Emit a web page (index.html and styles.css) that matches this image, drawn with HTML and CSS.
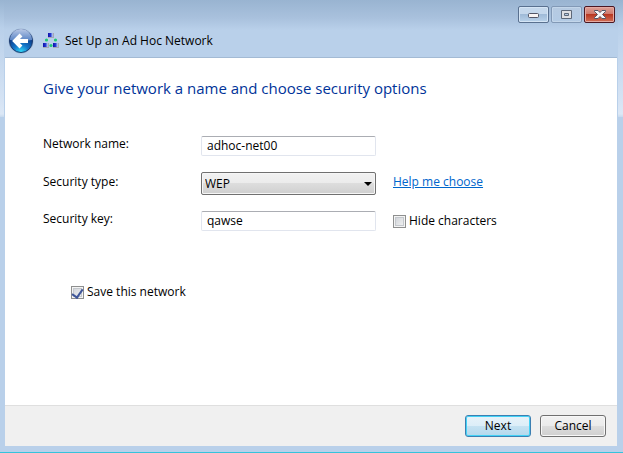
FILE: index.html
```html
<!DOCTYPE html>
<html lang="en">
<head>
<meta charset="utf-8">
<title>Set Up an Ad Hoc Network</title>
<link rel="stylesheet" href="styles.css">
</head>
<body>
<div class="window">
  <header class="titlebar">
    <div class="controls">
      <button class="control" type="button" aria-label="Minimize">
        <svg width="12" height="6" viewBox="0 0 12 6"><rect x=".5" y="1.5" width="10" height="4" rx="1" fill="#f8f4f4" stroke="#535666"/></svg>
      </button>
      <button class="control control-disabled" type="button" aria-label="Maximize" disabled>
        <svg width="12" height="10" viewBox="0 0 12 10"><path d="M.5.5h10v8H.5zM3.500 3.500v2h4v-2z" fill="#e0e0e3" fill-rule="evenodd" stroke="#5d6878"/></svg>
      </button>
      <button class="control control-close" type="button" aria-label="Close">
        <svg width="12" height="10" viewBox="0 0 12 10"><path d="M.5.5h3.500l2 2 2-2h3.500v1L8.500 4.500l3 3v1H8l-2-2-2 2H.5v-1l3-3-3-3z" fill="#f5f5f7" stroke="#535666"/></svg>
      </button>
    </div>
    <div class="nav">
      <button class="back" type="button" aria-label="Back">
        <svg width="26" height="26" viewBox="0 0 26 26">
          <defs>
            <linearGradient id="top" x2="0" y2="1"><stop offset="0" stop-color="#b9c8e6"/><stop offset="1" stop-color="#5480c3"/></linearGradient>
            <radialGradient id="base" cx=".5" cy="1" r=".75"><stop offset="0" stop-color="#35e6ff"/><stop offset=".45" stop-color="#1477c9"/><stop offset="1" stop-color="#0b3583"/></radialGradient>
          </defs>
          <circle cx="13" cy="13" r="12.500" fill="#9eb5d2"/>
          <circle cx="13" cy="13" r="11.500" fill="url(#base)" stroke="#1c3c70"/>
          <path d="M2 12a11 11 0 0 1 22 0Q13 14 2 12z" fill="url(#top)"/>
          <path d="M13 7 7 13l6 6M7.500 13H20" fill="none" stroke="#fff" stroke-width="4"/>
        </svg>
      </button>
      <svg class="network-icon" width="16" height="16" viewBox="0 0 16 16">
        <defs><linearGradient id="node"><stop offset="0" stop-color="#1010a8"/><stop offset=".5" stop-color="#2438d0"/><stop offset="1" stop-color="#c4d8f4"/></linearGradient></defs>
        <g fill="#a5a9b4"><path d="M5 0h6v5H5zM0 10h6v5H0zM10 10h6v5h-6z"/></g>
        <g fill="url(#node)"><path d="M5 0h5v4H5z"/><path d="M0 10h5v4H0z"/><path d="M10 10h5v4h-5z"/></g>
        <g fill="#20c878"><circle cx="3.500" cy="7" r="1.600"/><circle cx="12.500" cy="7" r="1.600"/><circle cx="8" cy="12.500" r="1.600"/></g>
      </svg>
      <span class="title">Set Up an Ad Hoc Network</span>
    </div>
  </header>
  <form class="page">
    <main class="content">
      <h1>Give your network a name and choose security options</h1>
      <div class="fields">
        <label class="caption" for="name">Network name:</label>
        <input class="text" id="name" type="text" value="adhoc-net00">
        <span></span>
        <label class="caption" for="type">Security type:</label>
        <div class="picker">
          <select id="type"><option>WEP</option></select>
          <svg class="arrow" width="8" height="4" viewBox="0 0 8 4"><path d="M0 0h8L4 4z"/></svg>
        </div>
        <a class="caption" href="#help">Help me choose</a>
        <label class="caption" for="key">Security key:</label>
        <input class="text" id="key" type="text" value="qawse">
        <label class="check"><input type="checkbox">Hide characters</label>
      </div>
      <label class="check save"><input type="checkbox" checked>Save this network</label>
    </main>
    <footer class="actions">
      <button class="button button-default" type="submit">Next</button>
      <button class="button" type="button">Cancel</button>
    </footer>
  </form>
</div>
</body>
</html>
```
FILE: styles.css
```css
* {
  box-sizing: border-box;
}

body {
  margin: 0;
  font: 12px/16px "Open Sans", "Noto Sans", sans-serif;
  color: #000;
}

button,
input,
select {
  margin: 0;
  font: inherit;
  color: inherit;
}

svg {
  display: block;
}

.window {
  display: flex;
  flex-direction: column;
  min-height: 100vh;
  padding: 0 6px 6px 5px;
  border-bottom: 1px solid #35c3dc;
  background:
    linear-gradient(#99b4d1 0, #b9d0ea 28px, #d5e3f4 100px, #dce8f6 114px, #c8daee 117px, transparent 117px) left / 4px 100% no-repeat,
    linear-gradient(#99b4d1 0, #b9d0ea 28px, #d5e3f4 100px, #dce8f6 114px, #c8daee 117px, transparent 117px) right / 5px 100% no-repeat,
    linear-gradient(#99b4d1 0, #a9c1dd 18px, #b9d0ea 30px) #b9d0ea;
}

.titlebar {
  padding-top: 6px;
  border-bottom: 1px solid #a3bad4;
}

.controls {
  display: flex;
  justify-content: flex-end;
  gap: 2px;
  padding-right: 2px;
}

.control {
  display: flex;
  align-items: center;
  justify-content: center;
  width: 31px;
  height: 17px;
  padding: 0;
  border: 1px solid #59708f;
  border-radius: 2px;
  background: linear-gradient(#c5d8ec 0 45%, #a0bbd8 50%, #b9d2ea);
  box-shadow: inset 0 0 0 1px #d5e5f5;
}

.control-disabled {
  border-color: #8299b6;
  background: linear-gradient(#b6cae1, #b3cbe5);
  box-shadow: inset 0 0 0 1px #c3d6ea;
}

.control-close {
  border-color: #4b1722;
  background: linear-gradient(#dda198 0, #d07a6d 45%, #b93822 50%, #d17058);
  box-shadow: inset 0 0 0 1px #e5aaa2;
}

.nav {
  display: flex;
  align-items: center;
  height: 34px;
  padding: 2px 0 0 3px;
}

.back {
  padding: 0;
  border: 0;
  background: none;
}

.network-icon {
  margin: 0 6px 0 9px;
}

.page {
  display: flex;
  flex: 1;
  flex-direction: column;
  background: #fff;
}

.content {
  flex: 1;
  padding: 19px 38px;
}

h1 {
  margin: 0 0 37px;
  font-size: 15px;
  line-height: 22px;
  font-weight: 400;
  color: #003399;
}

.fields {
  display: grid;
  grid-template-columns: 141px 175px auto;
  gap: 16px 17px;
  align-items: center;
  margin-bottom: 53px;
}

.caption {
  padding-bottom: 4px;
}

.text {
  width: 100%;
  height: 20px;
  padding: 0 5px 2px;
  border: 1px solid #e1e5ee;
  border-top-color: #abadb3;
  border-radius: 2px;
  background: #fff;
}

.picker {
  position: relative;
}

select {
  display: block;
  width: 100%;
  height: 23px;
  padding: 0 3px;
  appearance: none;
  border: 1px solid #707070;
  border-radius: 2px;
  background: linear-gradient(#f2f2f2, #ebebeb 50%, #dddddd 50%, #cfcfcf);
  box-shadow: inset 0 0 0 1px #f6f6f6;
}

.arrow {
  position: absolute;
  top: 10px;
  right: 4px;
  pointer-events: none;
}

a {
  color: #0066cc;
}

.check {
  display: flex;
  align-items: center;
  gap: 3px;
}

.check input {
  display: grid;
  flex: none;
  place-content: start center;
  width: 13px;
  height: 13px;
  appearance: none;
  border: 1px solid #8e8f8f;
  background: linear-gradient(135deg, #cbcfd5, #f6f6f6);
  box-shadow: inset 0 0 0 1px #f4f4f4, inset 0 0 0 2px #c4c8cd;
}

.check input:checked::before {
  content: "";
  width: 5px;
  height: 9px;
  border: solid #3f5699;
  border-width: 0 2px 2px 0;
  transform: rotate(35deg);
}

.save {
  margin-left: 28px;
}

.actions {
  display: flex;
  justify-content: flex-end;
  gap: 9px;
  padding: 9px 11px;
  border-top: 1px solid #dfdfdf;
  background: #f0f0f0;
}

.button {
  width: 66px;
  height: 22px;
  padding: 0;
  border: 1px solid #707070;
  border-radius: 3px;
  background: linear-gradient(#f2f2f2, #ebebeb 50%, #dddddd 50%, #cfcfcf);
  box-shadow: inset 0 0 0 1px #f8f8f8;
}

.button-default {
  border-color: #3c7fb1;
  background: linear-gradient(#e8f3f9, #dceef8 50%, #c5e2f2 50%, #b4d8ec);
  box-shadow: inset 0 0 0 1px #43d2f6;
}
```
